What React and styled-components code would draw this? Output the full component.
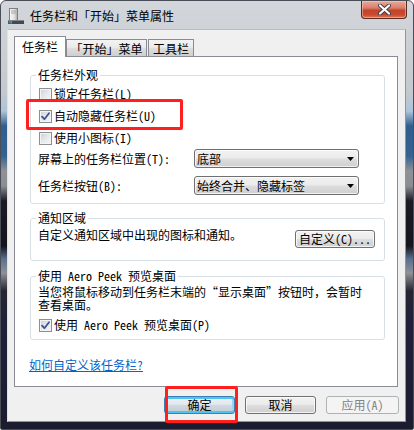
import React from "react";
import styled, { createGlobalStyle, css } from "styled-components";

const FONT = `"Noto Sans Mono CJK SC", "Noto Sans CJK SC", "Noto Sans", sans-serif`;

const GlobalStyle = createGlobalStyle`
  * { box-sizing: border-box; }
  html, body { margin: 0; padding: 0; background: #ffffff; }
  body { font-family: ${FONT}; font-size: 12px; color: #000; }
`;

const Window = styled.div`
  position: relative;
  width: 414px;
  height: 430px;
  border: 1px solid #4a4e58;
  border-radius: 6px 6px 2px 2px;
  display: flex;
  flex-direction: column;
  overflow: hidden;
  background: linear-gradient(
    to bottom,
    #d3d7db 0px,
    #c4c9ce 90px,
    #aec4da 110px,
    #2f5e8f 125px,
    #35628f 155px,
    #8e9296 170px,
    #8a8e92 185px,
    #1b1b24 200px,
    #15151d 245px,
    #5a7090 258px,
    #8f9194 272px,
    #262632 290px,
    #20203a 320px,
    #1c1c30 430px
  );
`;

const TitleBar = styled.div`
  height: 28px;
  display: flex;
  align-items: flex-start;
  flex: none;
`;

const AppIcon = styled.svg`
  width: 16px;
  height: 16px;
  margin: 7px 0 0 7px;
  flex: none;
`;

const Title = styled.div`
  margin: 8px 0 0 6px;
  line-height: 14px;
  font-size: 12px;
  color: #000;
  white-space: nowrap;
`;

const CloseButton = styled.div`
  margin-left: auto;
  margin-right: 6px;
  width: 46px;
  height: 18px;
  border: 1px solid #5a2a24;
  border-top: none;
  border-radius: 0 0 4px 4px;
  background: linear-gradient(
    to bottom,
    #e9a99a 0%,
    #d9806c 40%,
    #c4442b 55%,
    #c9482e 80%,
    #e0774f 100%
  );
  box-shadow: inset 0 0 0 1px rgba(255, 220, 210, 0.45);
  display: flex;
  align-items: center;
  justify-content: center;
`;

const Body = styled.div`
  flex: none;
  height: 393px;
  margin: 0 7px 0 6px;
  background: #f0f0f0;
  border: 1px solid #8e949c;
  border-left-color: #dfe3e8;
  border-top-color: #b9bec5;
  display: flex;
  flex-direction: column;
`;

const TabStrip = styled.div`
  display: flex;
  align-items: flex-end;
  padding: 6px 0 0 6px;
  height: 27px;
  margin-bottom: -1px;
`;

const Tab = styled.div`
  position: relative;
  display: flex;
  align-items: center;
  justify-content: center;
  width: ${(p) => p.$width}px;
  border: 1px solid #898c95;
  border-bottom: none;
  font-size: 12px;
  line-height: 14px;
  white-space: nowrap;
  ${(p) =>
    p.$active
      ? css`
          height: 21px;
          background: #ffffff;
          z-index: 1;
          padding-bottom: 1px;
        `
      : css`
          height: 17px;
          margin-bottom: 1px;
          margin-left: ${p.$gap}px;
          background: linear-gradient(to bottom, #f3f3f3 0%, #ebebeb 45%, #dcdcdc 55%, #cfcfcf 100%);
          padding-top: 1px;
        `}
`;

const Panel = styled.div`
  margin: 0 7px 0 6px;
  height: 331px;
  background: #ffffff;
  border: 1px solid #898c95;
  padding: 11px 12px 0 15px;
  display: flex;
  flex-direction: column;
`;

const Group = styled.fieldset`
  margin: ${(p) => p.$top || 0}px 0 0 0;
  padding: 1px 9px ${(p) => p.$bottom}px 7px;
  border: 1px solid #d5dfe5;
  border-radius: 3px;
  min-width: 0;
`;

const Legend = styled.legend`
  padding: 0 2px;
  margin-left: -2px;
  line-height: 14px;
  font-size: 12px;
  color: #000;
`;

const CheckRow = styled.label`
  display: flex;
  align-items: center;
  height: 22px;
  margin-top: ${(p) => p.$top || 0}px;
  line-height: 14px;
  white-space: nowrap;
`;

const CheckBox = styled.span`
  width: 13px;
  height: 13px;
  margin: 0 2px 0 1px;
  border: 1px solid #8e8f8f;
  background: linear-gradient(135deg, #cbcfd5 0%, #e6e8eb 50%, #f7f7f7 100%);
  box-shadow: inset 0 0 0 1px #f4f4f4;
  display: flex;
  align-items: center;
  justify-content: center;
  flex: none;
`;

const FieldRow = styled.div`
  display: grid;
  grid-template-columns: 156px 165px;
  align-items: center;
  height: 19px;
  margin-top: ${(p) => p.$top || 0}px;
  white-space: nowrap;
  line-height: 14px;
`;

const Select = styled.div`
  height: 19px;
  border: 1px solid #707070;
  border-radius: 3px;
  background: linear-gradient(to bottom, #f2f2f2 0%, #ebebeb 48%, #dddddd 52%, #cfcfcf 100%);
  box-shadow: inset 0 0 0 1px rgba(255, 255, 255, 0.7);
  display: flex;
  align-items: center;
  justify-content: space-between;
  padding: 0 4px 0 2px;
  line-height: 14px;
`;

const Text = styled.div`
  line-height: ${(p) => p.$lh || 14}px;
  margin-top: ${(p) => p.$top || 0}px;
  white-space: nowrap;
`;

const NotifyRow = styled.div`
  display: flex;
  justify-content: space-between;
  align-items: flex-start;
  padding-top: 2px;
`;

const Button = styled.div`
  width: ${(p) => p.$width}px;
  height: 18px;
  border: 1px solid #707070;
  border-radius: 3px;
  background: linear-gradient(to bottom, #f2f2f2 0%, #ebebeb 48%, #dddddd 52%, #cfcfcf 100%);
  box-shadow: inset 0 0 0 1px rgba(255, 255, 255, 0.75);
  display: flex;
  align-items: center;
  justify-content: center;
  line-height: 14px;
  margin-top: ${(p) => p.$top || 0}px;
  white-space: nowrap;
  ${(p) =>
    p.$default &&
    css`
      border-color: #3c7fb1;
      background: linear-gradient(to bottom, #eef3f6 0%, #e0e7ec 48%, #cfd8de 52%, #c3ccd3 100%);
      box-shadow: inset 0 2px 0 #4ec3f4, inset 0 -2px 0 #4ec3f4, inset 2px 0 0 #9ad6f3, inset -2px 0 0 #9ad6f3;
    `}
  ${(p) =>
    p.$disabled &&
    css`
      border-color: #adb2b5;
      background: #f4f4f4;
      box-shadow: none;
      color: #838383;
    `}
`;

const HelpLink = styled.a`
  margin: 18px 0 0 -1px;
  line-height: 14px;
  color: #0066cc;
  text-decoration: underline;
  align-self: flex-start;
  cursor: pointer;
`;

const ButtonRow = styled.div`
  display: flex;
  justify-content: flex-end;
  gap: 10px;
  margin-top: 9px;
  padding-right: 6px;
`;

const Highlight = styled.div`
  position: absolute;
  left: ${(p) => p.$x}px;
  top: ${(p) => p.$y}px;
  width: ${(p) => p.$w}px;
  height: ${(p) => p.$h}px;
  border: 3px solid #ff1f1f;
  border-radius: 2px;
  pointer-events: none;
`;

const Check = () => (
  <svg width="9" height="9" viewBox="0 0 9 9">
    <path d="M1 4.6 L3.4 7.2 L8 1.2" fill="none" stroke="#3f5393" strokeWidth="1.8" strokeLinecap="round" strokeLinejoin="round" />
  </svg>
);

const Arrow = () => (
  <svg width="7" height="4" viewBox="0 0 7 4">
    <path d="M0 0 H7 L3.5 4 Z" fill="#000" />
  </svg>
);

const Checkbox = ({ checked }) => <CheckBox>{checked && <Check />}</CheckBox>;

export default function App() {
  return (
    <>
      <GlobalStyle />
      <Window>
        <TitleBar>
          <AppIcon viewBox="0 0 16 16">
            <defs>
              <linearGradient id="tw" x1="0" y1="0" x2="1" y2="0">
                <stop offset="0" stopColor="#fafafa" />
                <stop offset="0.6" stopColor="#e2e2e2" />
                <stop offset="1" stopColor="#a8a8a8" />
              </linearGradient>
            </defs>
            <rect x="1.5" y="0.5" width="8" height="13" fill="url(#tw)" stroke="#7d7d7d" />
            <rect x="3" y="2.5" width="5" height="1" fill="#a5a5a5" />
            <rect x="3" y="4.5" width="5" height="1" fill="#a5a5a5" />
            <rect x="0" y="12" width="16" height="4" fill="#45484e" />
            <rect x="0" y="12" width="16" height="1" fill="#80848b" />
            <rect x="0.5" y="13" width="2" height="2.5" fill="#2f7fd0" />
            <rect x="2.5" y="13" width="1.5" height="2.5" fill="#5cb040" />
          </AppIcon>
          <Title>任务栏和「开始」菜单属性</Title>
          <CloseButton>
            <svg width="13" height="11" viewBox="0 0 13 11">
              <path d="M2 1.5 L11 9.5 M11 1.5 L2 9.5" stroke="#3a3f4a" strokeWidth="4" strokeLinecap="round" />
              <path d="M2 1.5 L11 9.5 M11 1.5 L2 9.5" stroke="#ffffff" strokeWidth="2.2" strokeLinecap="round" />
            </svg>
          </CloseButton>
        </TitleBar>

        <Body>
          <TabStrip>
            <Tab $active $width={52}>任务栏</Tab>
            <Tab $width={81} $gap={0}>「开始」菜单</Tab>
            <Tab $width={46} $gap={1}>工具栏</Tab>
          </TabStrip>

          <Panel>
            <Group $bottom={8}>
              <Legend>任务栏外观</Legend>
              <CheckRow>
                <Checkbox />
                锁定任务栏(L)
              </CheckRow>
              <CheckRow>
                <Checkbox checked />
                自动隐藏任务栏(U)
              </CheckRow>
              <CheckRow>
                <Checkbox />
                使用小图标(I)
              </CheckRow>
              <FieldRow>
                <span>屏幕上的任务栏位置(T):</span>
                <Select>
                  <span>底部</span>
                  <Arrow />
                </Select>
              </FieldRow>
              <FieldRow $top={8}>
                <span>任务栏按钮(B):</span>
                <Select>
                  <span>始终合并、隐藏标签</span>
                  <Arrow />
                </Select>
              </FieldRow>
            </Group>

            <Group $top={7} $bottom={12}>
              <Legend>通知区域</Legend>
              <NotifyRow>
                <Text>自定义通知区域中出现的图标和通知。</Text>
                <Button $width={80} $top={2}>自定义(C)...</Button>
              </NotifyRow>
            </Group>

            <Group $top={8} $bottom={3}>
              <Legend>使用 Aero Peek 预览桌面</Legend>
              <Text $lh={13} $top={1}>
                当您将鼠标移动到任务栏末端的“显示桌面”按钮时，会暂时
                <br />
                查看桌面。
              </Text>
              <CheckRow $top={3}>
                <Checkbox checked />
                使用 Aero Peek 预览桌面(P)
              </CheckRow>
            </Group>

            <HelpLink>如何自定义该任务栏?</HelpLink>
          </Panel>

          <ButtonRow>
            <Button $width={71} $default>确定</Button>
            <Button $width={71}>取消</Button>
            <Button $width={73} $disabled>应用(A)</Button>
          </ButtonRow>
        </Body>

        <Highlight $x={25} $y={98} $w={157} $h={31} />
        <Highlight $x={164} $y={385} $w={73} $h={37} />
      </Window>
    </>
  );
}
